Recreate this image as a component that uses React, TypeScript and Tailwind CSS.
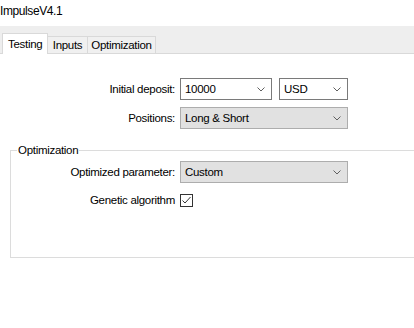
import React from "react";

function Chevron() {
  return (
    <svg width="8" height="5" viewBox="0 0 8 5" className="shrink-0">
      <polyline points="0.5,0.5 4,4 7.5,0.5" fill="none" stroke="#606060" strokeWidth="1" />
    </svg>
  );
}

function Combo({ value, width, gray }: { value: string; width: string; gray?: boolean }) {
  return (
    <div
      className={`${width} h-[22px] flex items-center justify-between pl-[4px] pr-[6px] border ${
        gray ? "bg-[#e1e1e1] border-[#adadad]" : "bg-white border-[#7a7a7a]"
      }`}
    >
      <span>{value}</span>
      <Chevron />
    </div>
  );
}

export default function App() {
  return (
    <div
      className="w-[414px] h-[328px] overflow-hidden bg-white text-black text-[11.5px] tracking-[-0.3px] leading-[14px]"
      style={{ fontFamily: '"Liberation Sans", Arial, sans-serif' }}
    >
      <div className="h-[26px] pl-[0px] pt-[4px] text-[12px] tracking-[-0.4px]">ImpulseV4.1</div>
      <div className="h-[28px] bg-[#eeeeee] border-b border-[#d9d9d9] flex items-end pl-[2px]">
        <div className="w-[46px] h-[21px] -mb-px bg-white border border-b-0 border-[#d9d9d9] pl-[5px] pt-[3px]">
          Testing
        </div>
        <div className="w-[41px] h-[17px] -ml-px bg-[#f0f0f0] border border-b-0 border-[#d9d9d9] flex items-center justify-center">
          Inputs
        </div>
        <div className="w-[69px] h-[17px] -ml-px bg-[#f0f0f0] border border-b-0 border-[#d9d9d9] flex items-center justify-center">
          Optimization
        </div>
      </div>

      <div className="pt-[24px] grid grid-cols-[175px_auto] gap-x-[5px] gap-y-[7px] items-center">
        <div className="text-right">Initial deposit:</div>
        <div className="flex gap-[7px]">
          <Combo value="10000" width="w-[92px]" />
          <Combo value="USD" width="w-[69px]" />
        </div>
        <div className="text-right">Positions:</div>
        <Combo value="Long & Short" width="w-[168px]" gray />
      </div>

      <fieldset className="mt-[14px] ml-[10px] w-[420px] border border-[#dcdcdc] pt-[4px] pb-[46px]">
        <legend className="ml-[6px] px-[1px] leading-[14px]">Optimization</legend>
        <div className="grid grid-cols-[164px_auto] gap-x-[5px] gap-y-[6px] items-center">
          <div className="text-right">Optimized parameter:</div>
          <Combo value="Custom" width="w-[168px]" gray />
          <div className="text-right">Genetic algorithm</div>
          <div className="h-[22px] flex items-center">
            <div className="w-[13px] h-[13px] border border-[#333333] bg-white flex items-center justify-center">
              <svg width="11" height="11" viewBox="0 0 11 11">
                <polyline points="1.5,5.5 4,8 9.5,2" fill="none" stroke="#333333" strokeWidth="1" />
              </svg>
            </div>
          </div>
        </div>
      </fieldset>
    </div>
  );
}
